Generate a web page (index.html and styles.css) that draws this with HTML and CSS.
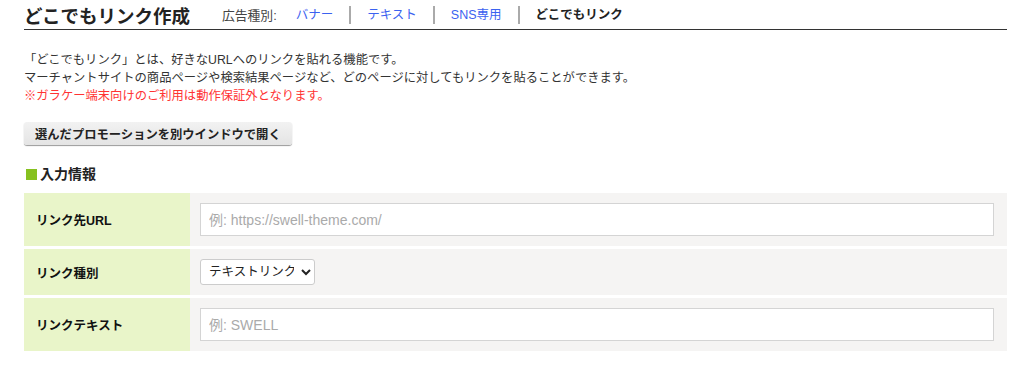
FILE: index.html
```html
<!DOCTYPE html>
<html>
<head>
    <title>どこでもリンク作成</title>
    <link rel="stylesheet" href="styles.css">
</head>
<body>
    <div class="container">
        <div class="page-head">
            <h1>どこでもリンク作成</h1>
            <span class="type-label">広告種別:</span>
            <ul class="type-nav">
                <li><a href="#">バナー</a></li>
                <li><a href="#">テキスト</a></li>
                <li><a href="#">SNS専用</a></li>
                <li class="current">どこでもリンク</li>
            </ul>
        </div>

        <div class="intro">
            <p>「どこでもリンク」とは、好きなURLへのリンクを貼れる機能です。</p>
            <p>マーチャントサイトの商品ページや検索結果ページなど、どのページに対してもリンクを貼ることができます。</p>
            <p class="note">※ガラケー端末向けのご利用は動作保証外となります。</p>
        </div>

        <button class="open-btn">選んだプロモーションを別ウインドウで開く</button>

        <h2 class="section-title">入力情報</h2>

        <div class="form-row">
            <div class="form-label">リンク先URL</div>
            <div class="form-value">
                <input type="text" class="text-input" placeholder="例: https://swell-theme.com/">
            </div>
        </div>
        <div class="form-row">
            <div class="form-label">リンク種別</div>
            <div class="form-value">
                <select class="select-input">
                    <option>テキストリンク</option>
                </select>
            </div>
        </div>
        <div class="form-row">
            <div class="form-label">リンクテキスト</div>
            <div class="form-value">
                <input type="text" class="text-input" placeholder="例: SWELL">
            </div>
        </div>
    </div>
</body>
</html>
```

FILE: styles.css
```css
body {
    margin: 0;
    font-family: "Liberation Sans", "Noto Sans CJK JP", sans-serif;
    color: #333;
    background-color: white;
}

.container {
    padding: 0 17px 0 24px;
}

.page-head {
    display: flex;
    align-items: center;
    height: 29px;
    border-bottom: 1px solid #333;
}

h1 {
    margin: 0 32px 0 0;
    font-size: 18.5px;
    font-weight: bold;
    color: #222;
}

.type-label {
    font-size: 12.8px;
    color: #444;
    margin-right: 3px;
}

.type-nav {
    display: flex;
    list-style: none;
    margin: 0;
    padding: 0;
}

.type-nav li {
    font-size: 12.5px;
    line-height: 18px;
    padding: 0 16px;
    border-left: 2px solid #aaa;
}

.type-nav li:first-child {
    border-left: none;
}

.type-nav a {
    color: #3b62f0;
    text-decoration: none;
}

.type-nav .current {
    font-weight: bold;
    color: #222;
}

.intro {
    margin-top: 21px;
    font-size: 12.3px;
    line-height: 18px;
}

.intro p {
    margin: 0;
}

.intro .note {
    color: #f33;
}

.open-btn {
    display: block;
    margin-top: 17px;
    height: 23px;
    padding: 0 11px;
    font-family: inherit;
    font-size: 12.3px;
    font-weight: bold;
    color: #222;
    background: linear-gradient(#f2f2f2, #e4e4e4);
    border: none;
    border-radius: 3px;
    box-shadow: 0 1px 1px #999;
}

.section-title {
    margin: 20px 0 10px 0;
    font-size: 14px;
    line-height: 18px;
    font-weight: bold;
    color: #222;
    display: flex;
    align-items: center;
}

.section-title::before {
    content: "";
    width: 11px;
    height: 11px;
    margin: 0 3px 0 2px;
    background-color: #86c11f;
}

.form-row {
    display: grid;
    grid-template-columns: 166px 1fr;
    margin-bottom: 3px;
}

.form-label {
    display: flex;
    align-items: center;
    padding: 0 12px;
    background-color: #e9f5c9;
    font-size: 12.5px;
    font-weight: bold;
    color: #111;
}

.form-value {
    background-color: #f5f4f3;
    padding: 10px 13px 10px 10px;
}

.text-input {
    width: 100%;
    height: 33px;
    box-sizing: border-box;
    padding: 0 8px;
    border: 1px solid #d4d4d4;
    font-family: "Liberation Sans", "Noto Sans CJK JP", sans-serif;
    font-size: 14px;
    color: #333;
    background-color: white;
}

.text-input::placeholder {
    color: #aaa;
}

.select-input {
    height: 26px;
    width: 115px;
    padding: 0 4px;
    border: 1px solid #ccc;
    border-radius: 3px;
    font-family: "Liberation Sans", "Noto Sans CJK JP", sans-serif;
    font-size: 12.5px;
    color: #222;
    background-color: white;
}
```
